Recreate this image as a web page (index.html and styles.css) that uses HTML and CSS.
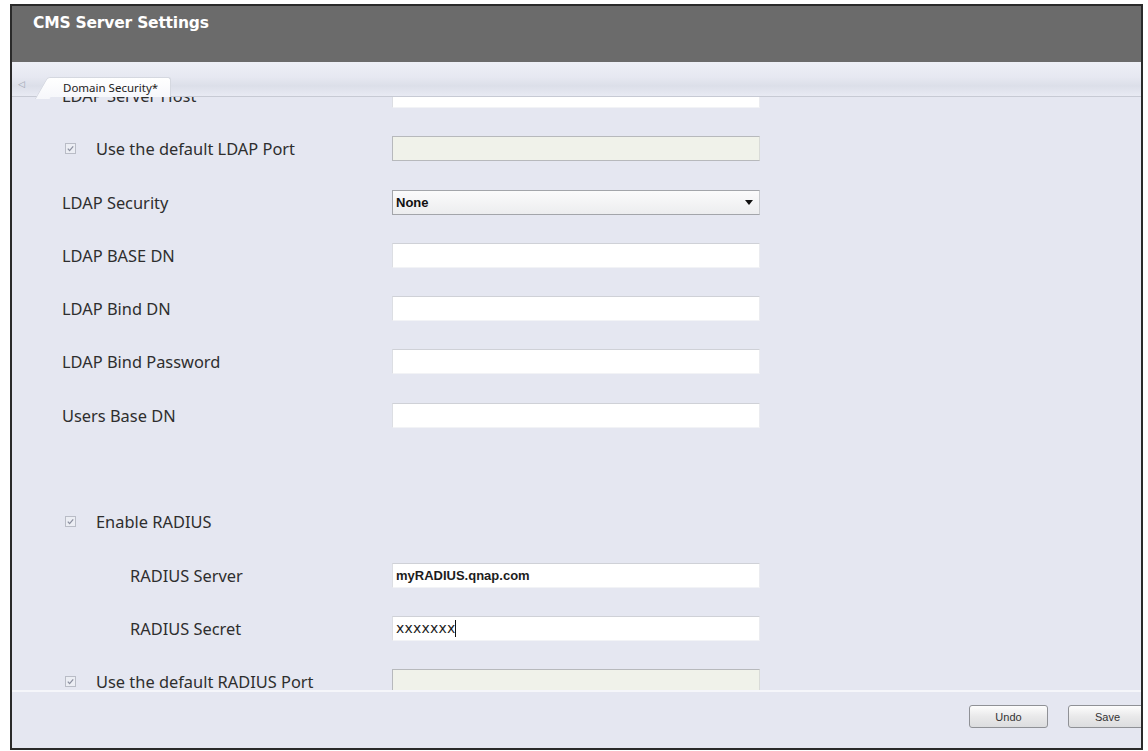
FILE: index.html
```html
<!DOCTYPE HTML>
<html lang="en">
<head>
    <meta charset="UTF-8">
    <title>CMS Server Settings</title>
    <link rel="stylesheet" href="styles.css">
</head>
<body>
    <div class="janela">
        <div class="titulo">CMS Server Settings</div>
        <div class="abas">
            <span class="seta">&#9665;</span>
            <div class="aba">Domain Security*</div>
        </div>
        <div class="conteudo">
            <div class="form">
                <label class="rotulo">LDAP Server Host</label>
                <input class="campo" type="text">

                <label class="rotulo check"><span class="caixa"><svg viewBox="0 0 10 10"><path d="M2 5.2 L4 7.4 L8 2.6" /></svg></span>Use the default LDAP Port</label>
                <input class="campo desativado" type="text" disabled>

                <label class="rotulo">LDAP Security</label>
                <div class="campo selecao"><b>None</b><span class="triangulo"></span></div>

                <label class="rotulo">LDAP BASE DN</label>
                <input class="campo" type="text">

                <label class="rotulo">LDAP Bind DN</label>
                <input class="campo" type="text">

                <label class="rotulo">LDAP Bind Password</label>
                <input class="campo" type="password">

                <label class="rotulo">Users Base DN</label>
                <input class="campo" type="text">

                <div class="vazio"></div>
                <div class="vazio"></div>

                <label class="rotulo check"><span class="caixa"><svg viewBox="0 0 10 10"><path d="M2 5.2 L4 7.4 L8 2.6" /></svg></span>Enable RADIUS</label>
                <div class="vazio"></div>

                <label class="rotulo recuo">RADIUS Server</label>
                <div class="campo valor">myRADIUS.qnap.com</div>

                <label class="rotulo recuo">RADIUS Secret</label>
                <div class="campo valor segredo">xxxxxxx<span class="cursor"></span></div>

                <label class="rotulo check"><span class="caixa"><svg viewBox="0 0 10 10"><path d="M2 5.2 L4 7.4 L8 2.6" /></svg></span>Use the default RADIUS Port</label>
                <input class="campo desativado" type="text" disabled>
            </div>
        </div>
        <div class="rodape">
            <button type="button" class="botao">Undo</button>
            <button type="button" class="botao">Save</button>
        </div>
    </div>
</body>
</html>
```

FILE: styles.css
```css
* { margin:0; padding:0; box-sizing:border-box; }
body { background-color:#ffffff; font-family:"Noto Sans", "Open Sans", sans-serif; }
.janela {
    margin:4px 0 0 10px;
    width:1133px;
    height:746px;
    border:2px solid #2a2a2a;
    background-color:#e5e7f1;
    display:flex;
    flex-direction:column;
    overflow:hidden;
}
.titulo {
    height:56px;
    background-color:#6b6b6b;
    color:#ffffff;
    font-family:"DejaVu Sans", sans-serif;
    font-weight:bold;
    font-size:15.5px;
    padding:8px 0 0 21px;
    letter-spacing:-0.2px;
}
.abas {
    height:35px;
    background:linear-gradient(#eef0f7, #e6e8f1 45%, #dcdfe9 70%, #e8eaf3);
    border-bottom:1px solid #c7cad4;
    display:flex;
    align-items:flex-end;
    padding-left:6px;
    position:relative;
    z-index:1;
}
.seta {
    font-size:9px;
    color:#9aa0ad;
    margin:0 0 6px 0;
    width:22px;
}
.aba {
    position:relative;
    height:20px;
    margin-left:10px;
    padding:2px 12px 0 13px;
    font-size:11.5px;
    color:#222;
    background:linear-gradient(#ffffff, #f6f7fb);
    border:1px solid #d5d8e0;
    border-bottom:none;
    border-left:none;
    border-radius:0 3px 0 0;
    margin-bottom:-1px;
}
.aba::before {
    content:"";
    position:absolute;
    left:-9px;
    top:-1px;
    width:14px;
    height:21px;
    background:linear-gradient(#ffffff, #f6f7fb);
    transform:skewX(-30deg);
    border-left:1px solid #d5d8e0;
    border-top:1px solid #d5d8e0;
    border-radius:3px 0 0 0;
    z-index:-1;
}
.conteudo {
    height:593px;
    overflow:hidden;
}
.form {
    margin-top:-14px;
    padding-left:50px;
    display:grid;
    grid-template-columns:330px 368px;
    grid-auto-rows:25px;
    row-gap:28.3px;
    align-items:center;
}
.rotulo {
    font-size:16.4px;
    color:#2e2e2e;
    display:flex;
    align-items:center;
    white-space:nowrap;
}
.check { padding-left:3px; }
.recuo { padding-left:68px; }
.caixa {
    width:11px;
    height:11px;
    border:1px solid #b9bcc6;
    background-color:#eceef4;
    margin-right:20px;
    display:flex;
}
.caixa svg { width:9px; height:9px; }
.caixa path { fill:none; stroke:#8c90a0; stroke-width:1.4; }
.campo {
    height:25px;
    width:368px;
    border:1px solid #d7d9df;
    border-color:#cfd1d7 #ebecf0 #f2f3f6 #dcdee3;
    background-color:#ffffff;
    font-family:"Liberation Sans", Arial, sans-serif;
    font-size:13px;
    outline:none;
}
.desativado {
    background-color:#f0f2ea;
    border:1px solid #b7b9bc;
    border-right-color:#d9dbd8;
}
.selecao {
    display:flex;
    align-items:center;
    justify-content:space-between;
    padding:0 6px 0 3px;
    background:linear-gradient(#fbfbfb, #ecedef);
    border:1px solid #a3a5aa;
    border-right-color:#c9cbcf;
    font-size:13px;
    color:#111;
}
.triangulo {
    border-left:4px solid transparent;
    border-right:4px solid transparent;
    border-top:5px solid #111;
}
.valor {
    display:flex;
    align-items:center;
    padding-left:3px;
    font-weight:bold;
    color:#1c1c1c;
}
.segredo {
    font-family:"DejaVu Sans", sans-serif;
    font-weight:normal;
    letter-spacing:0.2px;
    font-size:14px;
}
.cursor {
    display:inline-block;
    width:1px;
    height:17px;
    background-color:#111;
    margin-left:0;
}
.vazio { height:25px; }
.rodape {
    flex:1;
    border-top:2px solid #f5f6fa;
    display:flex;
    justify-content:flex-end;
    align-items:flex-start;
    padding-top:13px;
    gap:20px;
    margin-right:-6px;
}
.botao {
    width:79px;
    height:23px;
    border:1px solid #8f9196;
    border-radius:3px;
    background:linear-gradient(#fdfdfd, #e9e9ea 50%, #dcdddf);
    font-family:"Liberation Sans", Arial, sans-serif;
    font-size:11px;
    color:#333;
}
```
